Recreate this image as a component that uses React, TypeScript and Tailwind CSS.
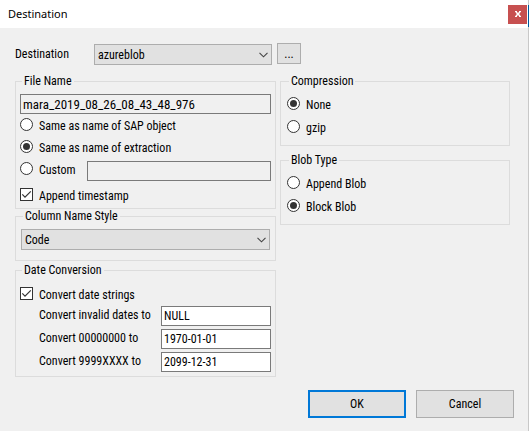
import type { ReactNode } from "react";
import { useState } from "react";

const field =
  "h-5 w-full min-w-0 border border-[#7a7a7a] px-[2px] text-black outline-none";

function Group({ title, children, className = "" }: { title: string; children: ReactNode; className?: string }) {
  return (
    <fieldset className={`min-w-0 border border-[#dcdcdc] ${className}`}>
      <legend className="ml-[2px] h-[15px] px-[2px] leading-[15px]">{title}</legend>
      {children}
    </fieldset>
  );
}

function Radio({ name, label, checked, onSelect, className = "h-[22px]" }: {
  name: string; label: string; checked: boolean; onSelect: () => void; className?: string;
}) {
  return (
    <label className={`flex shrink-0 items-start gap-[6px] pt-1 ${className}`}>
      <input
        type="radio"
        name={name}
        checked={checked}
        onChange={onSelect}
        className="grid size-[13px] shrink-0 appearance-none place-items-center rounded-full border border-[#333] bg-white before:size-[7px] before:rounded-full before:bg-transparent checked:before:bg-[#333]"
      />
      <span className="leading-4">{label}</span>
    </label>
  );
}

function Check({ label }: { label: string }) {
  return (
    <label className="flex h-[22px] items-start gap-[6px] pt-1">
      <span className="grid shrink-0">
        <input type="checkbox" defaultChecked className="peer col-start-1 row-start-1 size-[13px] appearance-none border border-[#333] bg-white" />
        <svg viewBox="0 0 13 13" className="pointer-events-none invisible col-start-1 row-start-1 size-[13px] peer-checked:visible" fill="none" stroke="#333" strokeWidth="1.2">
          <path d="M2.3 6.4 5 9.2 10.8 3.4" />
        </svg>
      </span>
      <span className="leading-4">{label}</span>
    </label>
  );
}

function Dropdown({ id, label, options }: { id: string; label?: string; options: string[] }) {
  return (
    <span className="grid w-full items-center">
      <select id={id} aria-label={label} className="col-start-1 row-start-1 h-[21px] w-full appearance-none border border-[#adadad] bg-[#e1e1e1] px-[3px] leading-4 outline-none">
        {options.map((o) => (
          <option key={o}>{o}</option>
        ))}
      </select>
      <svg viewBox="0 0 9 6" className="pointer-events-none col-start-1 row-start-1 mr-1 h-[6px] w-[9px] justify-self-end" fill="none" stroke="#444" strokeWidth="1.1">
        <path d="M0.5 0.8 4.5 4.8 8.5 0.8" />
      </svg>
    </span>
  );
}

const conversions = [
  { id: "invalid", label: "Convert invalid dates to", value: "NULL" },
  { id: "zeros", label: "Convert 00000000 to", value: "1970-01-01" },
  { id: "nines", label: "Convert 9999XXXX to", value: "2099-12-31" },
];

export default function App() {
  const [naming, setNaming] = useState("extraction");
  const [compression, setCompression] = useState("none");
  const [blob, setBlob] = useState("block");

  return (
    <div className="flex min-h-screen flex-col border-r border-[#c8c8c8] bg-[#f0f0f0] font-['Roboto_Condensed','Roboto',sans-serif] text-[12px] leading-4 font-normal whitespace-nowrap text-black">
      <header className="relative flex h-7 items-center justify-between bg-white pr-px pl-2 font-['Noto_Sans',sans-serif] text-[11px]">
        <h1>Destination</h1>
        <button aria-label="Close" className="grid size-[19px] place-items-center bg-[#c75050] text-white">
          <svg viewBox="0 0 6 6" className="size-[6px]" stroke="currentColor" strokeWidth="1.6">
            <path d="M1 1 5 5M5 1 1 5" />
            <path d="M0 0.5H2M4 0.5H6M0 5.5H2M4 5.5H6" strokeWidth="1" />
          </svg>
        </button>
        <span className="absolute top-[5px] -right-px h-[22px] w-px bg-[#005a9e]" />
      </header>

      <main className="pt-[15px] pr-[18px] pl-[15px]">
        <div className="flex items-start">
          <label htmlFor="destination" className="w-[79px] pt-[3px]">Destination</label>
          <div className="flex w-[178px] pt-px">
            <Dropdown id="destination" options={["azureblob"]} />
          </div>
          <button aria-label="Edit destinations" className="ml-[5px] h-[21px] w-6 border border-[#adadad] bg-[#e1e1e1]">...</button>
        </div>

        <div className="mt-[9px] grid grid-cols-[261fr_230fr] items-start gap-1">
          <div className="flex flex-col">
            <Group title="File Name" className="px-1 pt-[5px] pb-[2px]">
              <input aria-label="File name" readOnly value="mara_2019_08_26_08_43_48_976" className={`${field} block bg-[#f0f0f0] text-[13px]`} />
              <Radio name="naming" label="Same as name of SAP object" checked={naming === "object"} onSelect={() => setNaming("object")} />
              <Radio name="naming" label="Same as name of extraction" checked={naming === "extraction"} onSelect={() => setNaming("extraction")} />
              <div className="flex h-[22px] items-start">
                <Radio name="naming" label="Custom" checked={naming === "custom"} onSelect={() => setNaming("custom")} className="h-[22px] w-[67px]" />
                <input aria-label="Custom file name" disabled={naming !== "custom"} className={`${field} mt-[3px] bg-[#f0f0f0]`} />
              </div>
              <div className="mt-1">
                <Check label="Append timestamp" />
              </div>
            </Group>

            <Group title="Column Name Style" className="px-[5px] pt-[5px] pb-[10px]">
              <Dropdown id="column-style" label="Column Name Style" options={["Code"]} />
            </Group>

            <Group title="Date Conversion" className="mt-[2px] px-1 pt-[5px] pb-1">
              <Check label="Convert date strings" />
              <div className="mt-px grid grid-cols-[122px_1fr] gap-y-[3px] pl-[19px]">
                {conversions.map((c) => (
                  <div key={c.id} className="contents">
                    <label htmlFor={c.id} className="leading-[18px]">{c.label}</label>
                    <input id={c.id} defaultValue={c.value} className={`${field} bg-white`} />
                  </div>
                ))}
              </div>
            </Group>
          </div>

          <div className="flex flex-col gap-[7px]">
            <Group title="Compression" className="px-[6px] pt-1 pb-[6px]">
              <Radio name="compression" label="None" checked={compression === "none"} onSelect={() => setCompression("none")} className="h-[23px]" />
              <Radio name="compression" label="gzip" checked={compression === "gzip"} onSelect={() => setCompression("gzip")} className="h-[23px]" />
            </Group>
            <Group title="Blob Type" className="px-[6px] pt-1 pb-[6px]">
              <Radio name="blob" label="Append Blob" checked={blob === "append"} onSelect={() => setBlob("append")} className="h-[23px]" />
              <Radio name="blob" label="Block Blob" checked={blob === "block"} onSelect={() => setBlob("block")} className="h-[23px]" />
            </Group>
          </div>
        </div>
      </main>

      <footer className="mt-[13px] flex justify-end gap-[10px] pr-[14px]">
        <button className="h-7 w-[98px] border-2 border-[#0078d7] bg-[#e1e1e1]">OK</button>
        <button className="h-7 w-[98px] border border-[#adadad] bg-[#e1e1e1]">Cancel</button>
      </footer>
    </div>
  );
}
